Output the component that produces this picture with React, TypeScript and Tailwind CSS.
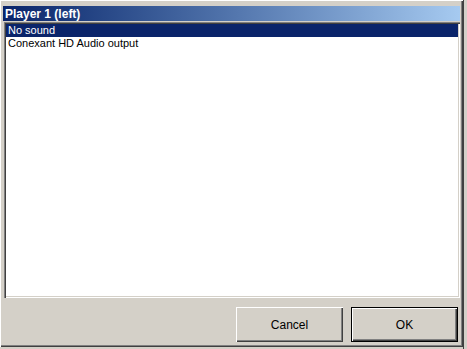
const devices = ["No sound", "Conexant HD Audio output"];

function Win98Button({ label, isDefault }: { label: string; isDefault?: boolean }) {
  return (
    <button
      className={
        "w-[107px] h-[35px] bg-[#d4d0c8] text-[12px] text-black " +
        (isDefault
          ? "border border-black shadow-[inset_1px_1px_0_#ffffff,inset_-1px_-1px_0_#404040,inset_-2px_-2px_0_#808080]"
          : "shadow-[inset_1px_1px_0_#ffffff,inset_-1px_-1px_0_#404040,inset_-2px_-2px_0_#808080]")
      }
    >
      {label}
    </button>
  );
}

export default function App() {
  return (
    <div
      className="w-[467px] h-[349px] bg-[#d4d0c8] flex overflow-hidden"
      style={{ fontFamily: '"Liberation Sans", Arial, sans-serif' }}
    >
      <div className="w-[463px] h-[347px] flex flex-col p-[3px] pt-[6px] shadow-[inset_1px_1px_0_#ffffff,inset_-1px_-1px_0_#404040,inset_-2px_-2px_0_#808080]">
        <div className="h-[15px] flex items-center px-[2px] bg-gradient-to-r from-[#0a246a] to-[#a6caf0]">
          <span className="text-white font-bold text-[12px] leading-none">Player 1 (left)</span>
        </div>
        <div className="mt-[1px] ml-[1px] h-[276px] bg-white p-[2px] shadow-[inset_1px_1px_0_#808080,inset_2px_2px_0_#404040,inset_-1px_-1px_0_#ffffff,inset_-2px_-2px_0_#d4d0c8]">
          <ul className="text-[11px] leading-[13px]">
            {devices.map((d, i) => (
              <li
                key={d}
                className={
                  "px-[2px] h-[13px] " +
                  (i === 0 ? "bg-[#0a246a] text-white" : "text-black")
                }
              >
                {d}
              </li>
            ))}
          </ul>
        </div>
        <div className="flex justify-end gap-[8px] mt-[9px] pr-[2px]">
          <Win98Button label="Cancel" />
          <Win98Button label="OK" isDefault />
        </div>
      </div>
      <div className="flex-1 border-l border-[#404040]" />
    </div>
  );
}
